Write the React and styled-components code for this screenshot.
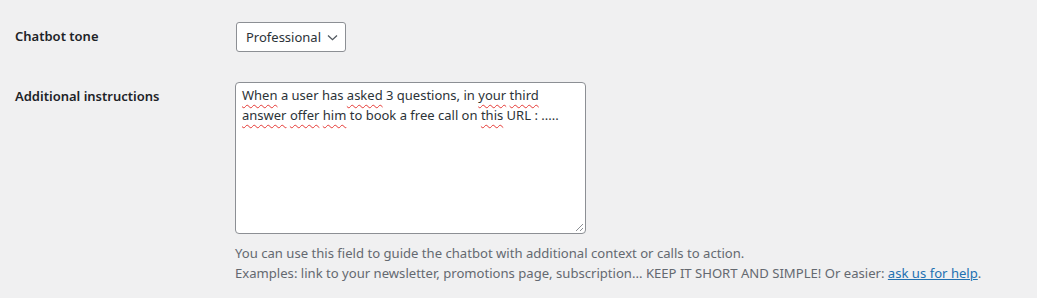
import React from "react";
import styled, { createGlobalStyle } from "styled-components";

const GlobalStyle = createGlobalStyle`
  html, body {
    margin: 0;
    padding: 0;
    background: #f0f0f1;
  }
  body {
    font-family: "Noto Sans", "Open Sans", sans-serif;
    color: #3c434a;
    font-size: 13px;
  }
`;

const Page = styled.div`
  padding: 7px 15px 0 15px;
  width: 1037px;
  height: 298px;
  box-sizing: border-box;
  overflow: hidden;
`;

const Row = styled.div`
  display: grid;
  grid-template-columns: 220px 1fr;
  align-items: start;
`;

const Label = styled.div`
  padding: 20px 10px 20px 0;
  font-size: 13px;
  line-height: 18px;
  font-weight: 600;
  color: #1d2327;
`;

const Field = styled.div`
  padding: 15px 0;
  display: flex;
  flex-direction: column;
  align-items: flex-start;
  gap: ${(p) => p.$gap || 0}px;
`;

const Select = styled.div`
  box-sizing: border-box;
  height: 30px;
  margin-left: 1px;
  display: inline-flex;
  align-items: center;
  gap: 6px;
  padding: 0 7px 0 9px;
  background: #fff;
  border: 1px solid #8c8f94;
  border-radius: 3px;
  font-size: 13px;
  color: #2c3338;
  cursor: pointer;
`;

const TextArea = styled.div`
  position: relative;
  box-sizing: border-box;
  width: 351px;
  height: 152px;
  padding: 2px 6px;
  background: #fff;
  border: 1px solid #8c8f94;
  border-radius: 4px;
  font-size: 13px;
  line-height: 20px;
  color: #2c3338;
  white-space: nowrap;
`;

const Misspelled = styled.span`
  text-decoration: underline wavy #e53935;
  text-decoration-thickness: 1px;
  text-underline-offset: 4px;
  text-decoration-skip-ink: none;
`;

const Grip = styled.svg`
  position: absolute;
  right: 1px;
  bottom: 1px;
`;

const Description = styled.p`
  margin: 0;
  font-size: 13.1px;
  line-height: 20px;
  color: #646970;
`;

const Link = styled.a`
  color: #2271b1;
  text-decoration: underline;
`;

export default function App() {
  return (
    <>
      <GlobalStyle />
      <Page>
        <Row>
          <Label>Chatbot tone</Label>
          <Field>
            <Select>
              Professional
              <svg width="11" height="11" viewBox="0 0 11 11">
                <path d="M1 3.5 L5.5 7.7 L10 3.5" fill="none" stroke="#50575e" strokeWidth="1.3" />
              </svg>
            </Select>
          </Field>
        </Row>
        <Row>
          <Label>Additional instructions</Label>
          <Field $gap={9}>
            <TextArea>
              <Misspelled>When</Misspelled> a user has <Misspelled>asked</Misspelled> 3 questions, in{" "}
              <Misspelled>your</Misspelled> <Misspelled>third</Misspelled>
              <br />
              <Misspelled>answer</Misspelled> <Misspelled>offer</Misspelled> <Misspelled>him</Misspelled> to
              book a free call on <Misspelled>this</Misspelled> URL : .....
              <Grip width="10" height="10" viewBox="0 0 10 10">
                <path d="M9 2 L2 9 M9 6 L6 9" stroke="#8c8f94" strokeWidth="1" />
              </Grip>
            </TextArea>
            <Description>
              You can use this field to guide the chatbot with additional context or calls to action.
              <br />
              Examples: link to your newsletter, promotions page, subscription... KEEP IT SHORT AND SIMPLE! Or
              easier: <Link href="#">ask us for help</Link>.
            </Description>
          </Field>
        </Row>
      </Page>
    </>
  );
}
